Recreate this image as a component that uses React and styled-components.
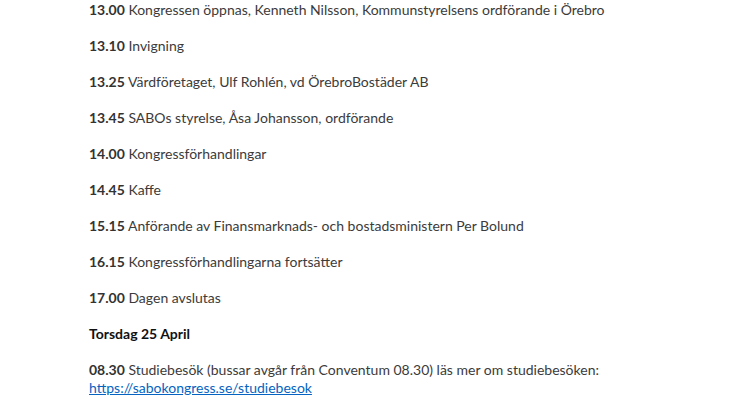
import React from 'react';
import styled, { createGlobalStyle } from 'styled-components';

const GlobalStyle = createGlobalStyle`
  body {
    margin: 0;
    background: #ffffff;
  }
`;

const Page = styled.div`
  display: flex;
  flex-direction: column;
  gap: 18px;
  padding: 1px 0 0 89px;
  font-family: Lato, "Open Sans", sans-serif;
  font-size: 14px;
  line-height: 18px;
  color: #3b3b3b;
`;

const Item = styled.p`
  margin: 0;
`;

const Time = styled.b`
  font-weight: 700;
  color: #333333;
`;

const DayTitle = styled.p`
  margin: 0;
  font-weight: 700;
  color: #111111;
`;

const Link = styled.a`
  color: #0563c1;
  text-decoration: underline;
`;

const schedule = [
    ['13.00', 'Kongressen öppnas, Kenneth Nilsson, Kommunstyrelsens ordförande i Örebro'],
    ['13.10', 'Invigning'],
    ['13.25', 'Värdföretaget, Ulf Rohlén, vd ÖrebroBostäder AB'],
    ['13.45', 'SABOs styrelse, Åsa Johansson, ordförande'],
    ['14.00', 'Kongressförhandlingar'],
    ['14.45', 'Kaffe'],
    ['15.15', 'Anförande av Finansmarknads- och bostadsministern Per Bolund'],
    ['16.15', 'Kongressförhandlingarna fortsätter'],
    ['17.00', 'Dagen avslutas'],
];

const App = () => {
    return <>
        <GlobalStyle />
        <Page>
            {schedule.map(([time, text]) =>
                <Item key={time}><Time>{time}</Time> {text}</Item>)}
            <DayTitle>Torsdag 25 April</DayTitle>
            <Item>
                <Time>08.30</Time> Studiebesök (bussar avgår från Conventum 08.30) läs mer om studiebesöken:
                <br />
                <Link href="#">https://sabokongress.se/studiebesok</Link>
            </Item>
        </Page>
    </>
}

export default App
